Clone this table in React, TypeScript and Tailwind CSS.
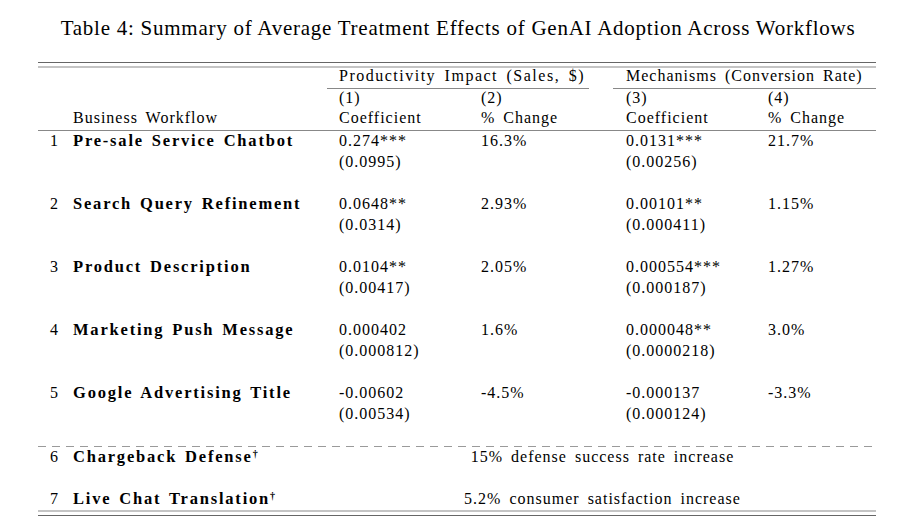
const rows = [
  { n: '1', name: 'Pre-sale Service Chatbot', c1: '0.274***', s1: '(0.0995)', p1: '16.3%', c2: '0.0131***', s2: '(0.00256)', p2: '21.7%' },
  { n: '2', name: 'Search Query Refinement', c1: '0.0648**', s1: '(0.0314)', p1: '2.93%', c2: '0.00101**', s2: '(0.000411)', p2: '1.15%' },
  { n: '3', name: 'Product Description', c1: '0.0104**', s1: '(0.00417)', p1: '2.05%', c2: '0.000554***', s2: '(0.000187)', p2: '1.27%' },
  { n: '4', name: 'Marketing Push Message', c1: '0.000402', s1: '(0.000812)', p1: '1.6%', c2: '0.000048**', s2: '(0.0000218)', p2: '3.0%' },
  { n: '5', name: 'Google Advertising Title', c1: '-0.00602', s1: '(0.00534)', p1: '-4.5%', c2: '-0.000137', s2: '(0.000124)', p2: '-3.3%' },
];

const cols = 'grid grid-cols-[35px_266px_142px_145px_142px_108px]';
const grid = `${cols} auto-rows-[21px] leading-[19px]`;
const bold = 'font-bold text-[16.5px] tracking-[1.8px] [word-spacing:2px]';

export default function App() {
  return (
    <div className="w-[910px] h-[521px] bg-white text-black overflow-hidden font-['Liberation_Serif',serif] text-[16px] leading-[15px] tracking-[1px] [word-spacing:3px]">
      <h1 className="pt-[16px] h-[62px] text-center text-[21px] leading-[24px] tracking-[0.75px] [word-spacing:0px] pl-[6px]">
        Table 4: Summary of Average Treatment Effects of GenAI Adoption Across Workflows
      </h1>

      <div className="ml-[38px] w-[838px]">
        <div className="h-px bg-[#666]" />
        <div className="h-[3px]" />
        <div className="h-[2px] bg-[#c4c4c4]" />

        {/* header */}
        <div className={`${cols} h-[20px]`}>
          <div />
          <div />
          <div className="col-span-2 tracking-[1.5px]">Productivity Impact (Sales, $)</div>
          <div className="col-span-2">Mechanisms (Conversion Rate)</div>
        </div>
        <div className="flex h-px">
          <div className="w-[289px]" />
          <div className="w-[262px] bg-[#888]" />
          <div className="w-[24px]" />
          <div className="w-[263px] bg-[#888]" />
        </div>
        <div className={`${cols} grid-rows-[20px_21px] leading-[17px]`}>
          <div />
          <div />
          <div>(1)</div>
          <div>(2)</div>
          <div>(3)</div>
          <div>(4)</div>
          <div />
          <div>Business Workflow</div>
          <div>Coefficient</div>
          <div>% Change</div>
          <div>Coefficient</div>
          <div>% Change</div>
        </div>
        <div className="h-px bg-[#888]" />

        {/* body */}
        {rows.map((r) => (
          <div key={r.n} className={`${grid} pb-[21px]`}>
            <div className="pl-[12px]">{r.n}</div>
            <div className={bold}>{r.name}</div>
            <div>{r.c1}</div>
            <div>{r.p1}</div>
            <div>{r.c2}</div>
            <div>{r.p2}</div>
            <div />
            <div />
            <div>{r.s1}</div>
            <div />
            <div>{r.s2}</div>
            <div />
          </div>
        ))}

        <div className="h-px bg-[repeating-linear-gradient(to_right,#9a9a9a_0_8px,transparent_8px_14px)]" />

        <div className={`${grid} pb-[21px]`}>
          <div className="pl-[12px]">6</div>
          <div className={bold}>
            Chargeback Defense<sup className="text-[10px]">†</sup>
          </div>
          <div className="col-span-4 text-center pr-[10px]">15% defense success rate increase</div>
        </div>
        <div className={grid}>
          <div className="pl-[12px]">7</div>
          <div className={bold}>
            Live Chat Translation<sup className="text-[10px]">†</sup>
          </div>
          <div className="col-span-4 text-center pr-[10px]">5.2% consumer satisfaction increase</div>
        </div>

        <div className="h-[2px] bg-[#c4c4c4]" />
        <div className="h-[3px]" />
        <div className="h-px bg-[#666]" />
      </div>
    </div>
  );
}
